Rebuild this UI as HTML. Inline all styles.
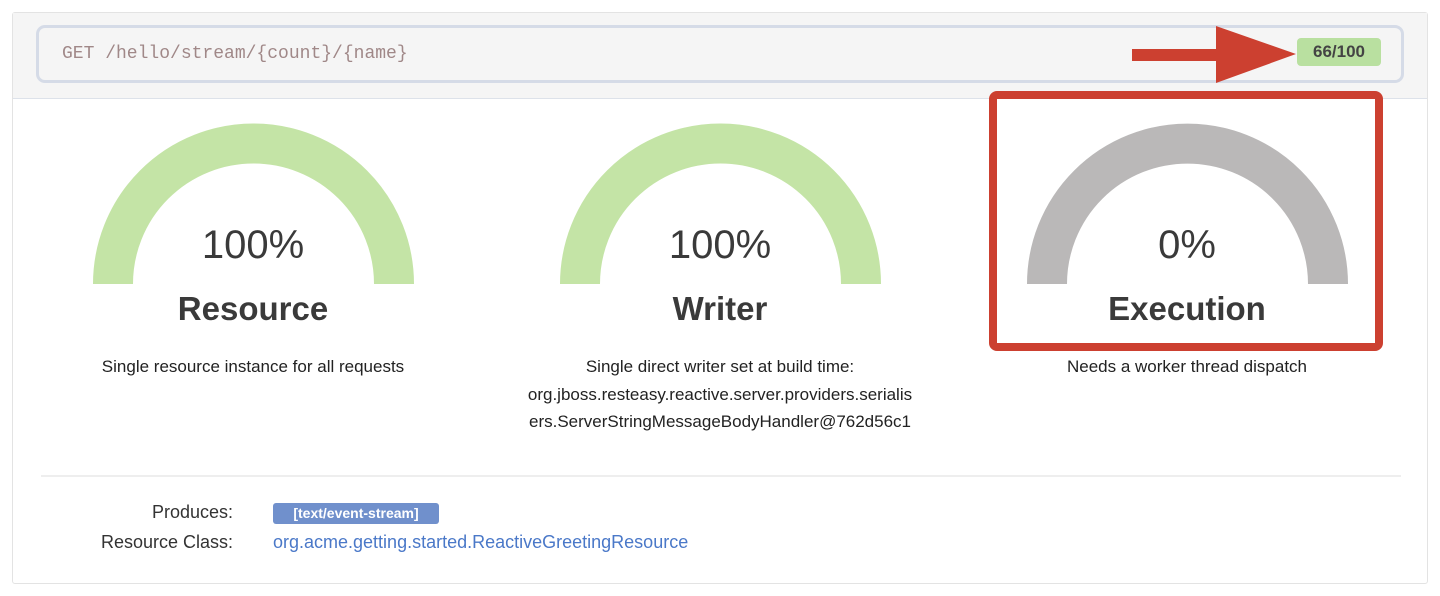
<!DOCTYPE html>
<html><head><meta charset="utf-8"><style>
body{margin:0;width:1440px;height:596px;background:#fff;font-family:"Liberation Sans",Arial,sans-serif;position:relative;overflow:hidden}
.card{position:absolute;left:12px;top:12px;width:1414px;height:570px;border:1px solid #e3e3e3;border-radius:3px;background:#fff}
.head{position:absolute;left:0;top:0;width:1414px;height:85px;background:#f5f5f5;border-bottom:1px solid #dde2ea}
.inp{position:absolute;left:23px;top:12px;width:1362px;height:52px;border:3px solid #d5dbe7;border-radius:9px;background:#f5f5f5}
.path{position:absolute;left:23px;top:16px;font-family:"Liberation Mono",monospace;font-size:18px;color:#a08888}
.score{position:absolute;left:1258px;top:10px;width:84px;height:28px;background:#b9e0a0;border-radius:4px;font-weight:bold;font-size:17px;color:#444;text-align:center;line-height:28px}
.t{position:absolute;text-align:center;color:#3a3a3a}
.pct{font-size:40px;width:400px;top:223px}
.ttl{font-size:33px;font-weight:bold;width:400px;top:290px;color:#3a3a3a}
.desc{font-size:17px;width:440px;top:353px;line-height:27.5px;color:#222}
.lbl{position:absolute;font-size:18px;color:#333;text-align:right;width:200px;left:33px}
</style></head><body>
<div class="card">
 <div class="head"><div class="inp"><div class="path">GET /hello/stream/{count}/{name}</div><div class="score">66/100</div></div></div>
 <div style="position:absolute;left:28px;top:462px;width:1360px;height:2px;background:#eee"></div>
</div>
<svg width="1440" height="596" style="position:absolute;left:0;top:0">
 <path d="M113,284 A140.5,140.5 0 0 1 394,284" fill="none" stroke="#c4e4a6" stroke-width="40"/>
 <path d="M580,284 A140.5,140.5 0 0 1 861,284" fill="none" stroke="#c4e4a6" stroke-width="40"/>
 <path d="M1047,284 A140.5,140.5 0 0 1 1328,284" fill="none" stroke="#bab8b8" stroke-width="40"/>
 <rect x="993" y="95" width="386" height="252" rx="4" fill="none" stroke="#cc4030" stroke-width="8"/>
 <rect x="1132" y="49" width="88" height="12" fill="#cc4030"/>
 <polygon points="1216,26 1296,54 1216,83" fill="#cc4030"/>
</svg>
<div class="t pct" style="left:53px">100%</div>
<div class="t ttl" style="left:53px">Resource</div>
<div class="t desc" style="left:33px">Single resource instance for all requests</div>
<div class="t pct" style="left:520px">100%</div>
<div class="t ttl" style="left:520px">Writer</div>
<div class="t desc" style="left:500px">Single direct writer set at build time:<br>org.jboss.resteasy.reactive.server.providers.serialis<br>ers.ServerStringMessageBodyHandler@762d56c1</div>
<div class="t pct" style="left:987px">0%</div>
<div class="t ttl" style="left:987px">Execution</div>
<div class="t desc" style="left:967px">Needs a worker thread dispatch</div>
<div class="lbl" style="top:502px">Produces:</div>
<div class="lbl" style="top:532px">Resource Class:</div>
<div style="position:absolute;left:273px;top:503px;width:166px;height:21px;background:#7090cc;border-radius:3px;color:#fff;font-weight:bold;font-size:14px;text-align:center;line-height:21px">[text/event-stream]</div>
<div style="position:absolute;left:273px;top:532px;font-size:18px;color:#4a78c8">org.acme.getting.started.ReactiveGreetingResource</div>
</body></html>
